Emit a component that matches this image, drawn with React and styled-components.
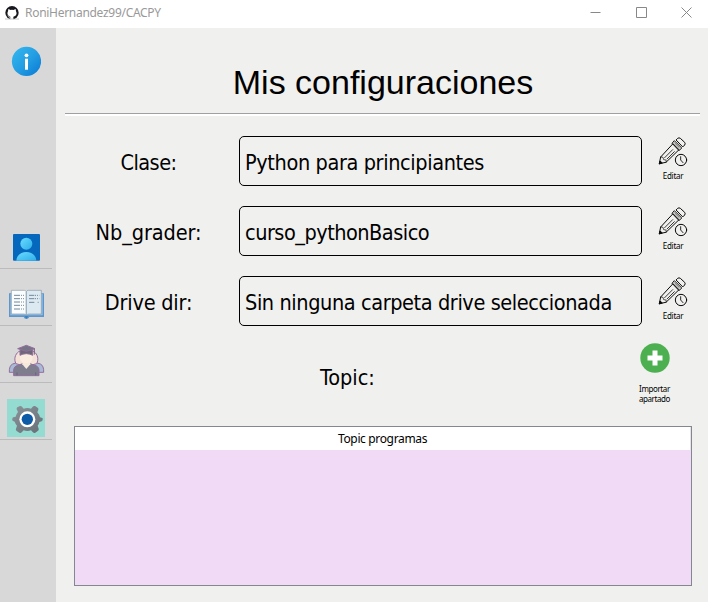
import React from 'react';
import styled, { createGlobalStyle } from 'styled-components';

const Global = createGlobalStyle`
  * { box-sizing: border-box; }
  body { margin: 0; background: #f0f0ee; }
  button { border: 0; padding: 0; background: none; font: inherit; color: inherit; }
`;

const Window = styled.div`
  width: 708px;
  height: 602px;
  display: flex;
  flex-direction: column;
  overflow: hidden;
  background: #f0f0ee;
  color: #000;
  font-family: "DejaVu Sans Condensed", "DejaVu Sans", sans-serif;
`;

const TitleBar = styled.header`
  height: 28px;
  flex: none;
  display: flex;
  align-items: center;
  background: #fff;
  padding: 0 0 3px 5px;
`;

const WindowTitle = styled.span`
  flex: 1;
  margin-left: 6px;
  font: 12px/16px "Noto Sans", sans-serif;
  letter-spacing: -0.29px;
  color: #999;
`;

const WindowButton = styled.button`
  width: 46px;
  height: 25px;
  display: flex;
  align-items: center;
  justify-content: center;

  &:last-child {
    width: 44px;
  }
`;

const Body = styled.div`
  flex: 1;
  display: flex;
  min-height: 0;
`;

const Sidebar = styled.nav`
  width: 56px;
  flex: none;
  background: #d8d8d8;
  display: flex;
  flex-direction: column;
`;

const InfoButton = styled.button`
  width: 30px;
  height: 30px;
  margin: 18px 0 136px 11px;
  display: block;
`;

const NavCell = styled.div`
  width: 52px;
  height: 57px;
  border-bottom: 1px solid #bbb;
  display: flex;
  align-items: flex-end;
  padding: 0 0 2px 7px;
`;

const NavButton = styled.button`
  width: 38px;
  height: 38px;
  background: ${p => (p.$active ? '#94dbd2' : 'transparent')};
`;

const Icon = styled.svg`
  display: block;
  flex: none;
`;

const Main = styled.main`
  flex: 1;
  min-width: 0;
  padding: 0 8px 0 9px;
`;

const Heading = styled.h1`
  margin: 0;
  height: 86px;
  padding: 34px 0 0 1px;
  text-align: center;
  font: 400 34px/40px "Liberation Sans", sans-serif;
  border-bottom: 1px solid #a0a0a0;
`;

const Settings = styled.section`
  border-top: 2px solid #fff;
  padding-top: 20px;
`;

const Row = styled.div`
  display: grid;
  grid-template-columns: 167px 403px 64px;
  column-gap: 7px;
  height: 50px;
  margin-bottom: 20px;
`;

const Label = styled.div`
  font-size: 21.5px;
  line-height: 26px;
  align-self: center;
  text-align: center;
  padding-top: 3px;
  letter-spacing: ${p => p.$tracking || 0}px;
`;

const Field = styled.div`
  border: 1px solid #000;
  border-radius: 5px;
  display: flex;
  align-items: center;
  padding: 2px 0 0 5px;
  font-size: 21.5px;
  white-space: nowrap;
  letter-spacing: ${p => p.$tracking || 0}px;
`;

const EditButton = styled.button`
  width: 30px;
  margin: 1px 0 0 9px;
  display: flex;
  flex-direction: column;
  align-items: center;
`;

const Caption = styled.span`
  margin-top: ${p => p.$gap}px;
  font: 8px/10px "Noto Sans", sans-serif;
  letter-spacing: ${p => p.$tracking}px;
  text-align: center;
`;

const TopicRow = styled.div`
  height: 80px;
  display: grid;
  grid-template-columns: 565px 48px;
  align-items: start;
`;

const TopicLabel = styled(Label)`
  align-self: start;
  padding-top: 19px;
`;

const ImportButton = styled.button`
  width: 49px;
  margin-top: -3px;
  display: flex;
  flex-direction: column;
  align-items: center;
`;

const Table = styled.section`
  margin: 0 8px 0 9px;
  height: 160px;
  border: 1px solid #828790;
  background: #f0daf6;
`;

const TableHead = styled.header`
  height: 23px;
  background: #fff;
  border-right: 1px solid #e5e5e5;
  padding-top: 1px;
  text-align: center;
  font: 12px/22px "Noto Sans", sans-serif;
  letter-spacing: -0.35px;
`;

const Octocat = () => (
  <Icon width="14" height="14" viewBox="0 0 42 42">
    <circle cx="21" cy="20" r="20" fill="#17171d" />
    <path d="M10 9l7 3q4-1 8 0l7-3 1 7c5 10-2 15-8 16v10h-9V32C9 30 5 24 9 16z" fill="#fff" />
    <path d="M0 39h42" stroke="#aaa" strokeWidth="2" />
    <path d="M8 29q4 0 5 5t4 2" fill="none" stroke="#fff" strokeWidth="2" />
  </Icon>
);

const InfoIcon = () => (
  <Icon width="30" height="30" viewBox="0 0 30 30">
    <defs>
      <linearGradient id="info" x1="0" y1="0" x2="1" y2="1">
        <stop stopColor="#35b8ef" /><stop offset=".5" stopColor="#249fe3" /><stop offset="1" stopColor="#0878d4" />
      </linearGradient>
    </defs>
    <circle cx="15.5" cy="15.4" r="14.6" fill="url(#info)" />
    <circle cx="15.5" cy="9.3" r="1.9" fill="#fff" />
    <path d="M14 12.7h3v11h-3z" fill="#fff" />
  </Icon>
);

const UserIcon = () => (
  <Icon width="38" height="38" viewBox="21 9 114 114">
    <defs>
      <linearGradient id="user" x1="0" y1="0" x2="1" y2="1">
        <stop stopColor="#6adcff" /><stop offset="1" stopColor="#2eaee9" />
      </linearGradient>
    </defs>
    <rect x="39" y="27" width="81" height="80" rx="3" fill="#0668bd" />
    <circle cx="79" cy="56" r="18" fill="url(#user)" />
    <path d="M49 107c1-16 14-26 30-26s29 10 30 26z" fill="url(#user)" />
  </Icon>
);

const BookIcon = () => (
  <Icon width="38" height="38" viewBox="21 180 114 114">
    <path d="M27 205h105v71H88q-3 6-9 6t-8-6H27z" fill="#5d95cc" />
    <path d="M31 207h97v64H31z" fill="#94c1e8" />
    <path d="M34 196h39q4 0 6 4v71q-3-4-7-4H34z" fill="#fbfcfd" stroke="#8597a5" strokeWidth="2" />
    <path d="M79 200q2-4 6-4h39v71H87q-5 0-8 4z" fill="#dce9f1" stroke="#8597a5" strokeWidth="2" />
    <path d="M79 200v69" stroke="#9ab1c1" strokeWidth="2" />
    <g stroke="#71889a" strokeWidth="3">
      <path d="M42 211h18M42 221h18M42 231h18M42 241h18M42 252h18M87 211h16M87 221h16M87 232h16" />
      <path d="M63 211h9M63 221h9M63 231h9M63 241h9M63 252h9M105 211h13M105 221h13M113 232h4" strokeDasharray="3 3" />
    </g>
    <path d="M74 274l5 7 6-7" fill="#337ec1" />
  </Icon>
);

const StudentsIcon = () => (
  <Icon width="38" height="38" viewBox="21 21 114 114">
    <g stroke="#926e9d" strokeWidth="3" strokeLinejoin="round">
      <path d="M28 112q-1-20 10-25l15-5h53l15 5q11 5 10 25z" fill="#a8bad5" />
      <path d="M48 86c-7-13-3-28 8-36h46c11 8 15 23 8 36l-11 3H59z" fill="#f4e2d8" />
      <path d="M41 122v-17q1-12 15-15l12-4h22l12 4q14 3 15 15v17z" fill="#7d7d8e" />
      <path d="M68 80l-1 8 12 14 12-14-1-8z" fill="#f5e9dc" stroke="none" />
      <path d="M60 49h38v17q0 18-19 19-19-1-19-19z" fill="#faeddf" stroke="none" />
      <path d="M60 45l19-5 19 5v16q-8-5-19-5t-19 5z" fill="#6c6878" />
      <path d="M53 41l26-10 26 10-26 8z" fill="#777386" />
    </g>
    <path d="M103 42v17" stroke="#77627e" strokeWidth="3" />
    <path d="M51 112v9M107 112v9" stroke="#655a78" strokeWidth="2" />
  </Icon>
);

const GearIcon = () => (
  <Icon width="38" height="38" viewBox="21 192 114 114">
    <defs>
      <linearGradient id="gear" x1="0" y1="0" x2="1" y2="1">
        <stop stopColor="#8c949b" /><stop offset="1" stopColor="#666e76" />
      </linearGradient>
    </defs>
    <path d="M60 213q3-1 6 2l5 6q11-4 22 0l5-6q3-3 7-2l8 5q3 2 2 6l-3 8q6 7 8 15l7 2q2 1 1 5-1 4-3 5l-7 2q-1 6-5 11l3 9q1 4-2 6l-8 6q-4 2-8-2l-5-5q-11 4-22 0l-5 5q-4 4-8 2l-8-5q-4-3-2-7l3-9q-5-6-7-12l-6-3q-2-1-1-6 0-3 3-4l7-2q2-8 7-14l-4-8q-1-4 2-6z" fill="url(#gear)" />
    <circle cx="82" cy="253" r="24" fill="#fff" />
    <circle cx="82" cy="253" r="17" fill="#0d5ba7" />
  </Icon>
);

const PencilIcon = () => (
  <Icon width="30" height="30" viewBox="84 36 90 90" fill="none" stroke="#090909" strokeWidth="3" strokeLinejoin="round" strokeLinecap="round">
    <path d="M88 115l4-19 37-40 18 18-38 37z" />
    <path d="M92 96l7 1 2 7 7 1 1 6" strokeWidth="2" />
    <path d="M104 98l24-24M111 102l22-22" strokeWidth="2.4" />
    <path d="M127 54l6-7 22 22-7 7z" />
    <path d="M134 54l14 14" strokeWidth="2" />
    <path d="M139 44l4-4q4-3 8 0l13 12q3 4 0 8l-5 5z" />
    <path d="M88 116l2-8 6 5z" fill="#090909" />
    <circle cx="153" cy="105" r="17" fill="#f0f0ee" />
    <path d="M152 95v10l7 8" strokeWidth="2.6" />
  </Icon>
);

const PlusIcon = () => (
  <Icon width="30" height="30" viewBox="0 0 30 30">
    <circle cx="15" cy="15" r="14.7" fill="#4caf50" />
    <path d="M12.5 7.5h5v5h5v5h-5v5h-5v-5h-5v-5h5z" fill="#fff" />
  </Icon>
);

const rows = [
  { label: 'Clase:', labelTracking: -0.5, value: 'Python para principiantes', tracking: -0.38 },
  { label: 'Nb_grader:', labelTracking: -0.1, value: 'curso_pythonBasico', tracking: -0.5 },
  { label: 'Drive dir:', labelTracking: -0.2, value: 'Sin ninguna carpeta drive seleccionada', tracking: -0.4 },
];

const nav = [UserIcon, BookIcon, StudentsIcon, GearIcon];

export default function App() {
  return (
    <>
      <Global />
      <Window>
        <TitleBar>
          <Octocat />
          <WindowTitle>RoniHernandez99/CACPY</WindowTitle>
          {['M.5 5.5h10', 'M.5.5h10v10H.5z', 'M.5.5l10 10M10.5.5l-10 10'].map(d => (
            <WindowButton key={d}>
              <Icon width="11" height="11" viewBox="0 0 11 11" fill="none" stroke="#888"><path d={d} /></Icon>
            </WindowButton>
          ))}
        </TitleBar>
        <Body>
          <Sidebar>
            <InfoButton><InfoIcon /></InfoButton>
            {nav.map((NavIcon, i) => (
              <NavCell key={i}><NavButton $active={i === 3}><NavIcon /></NavButton></NavCell>
            ))}
          </Sidebar>
          <Main>
            <Heading>Mis configuraciones</Heading>
            <Settings>
              {rows.map(r => (
                <Row key={r.label}>
                  <Label $tracking={r.labelTracking}>{r.label}</Label>
                  <Field $tracking={r.tracking}>{r.value}</Field>
                  <EditButton>
                    <PencilIcon />
                    <Caption $gap={4} $tracking={-0.3}>Editar</Caption>
                  </EditButton>
                </Row>
              ))}
              <TopicRow>
                <TopicLabel>Topic:</TopicLabel>
                <ImportButton>
                  <PlusIcon />
                  <Caption $gap={11} $tracking={-0.4}>Importar<br />apartado</Caption>
                </ImportButton>
              </TopicRow>
            </Settings>
            <Table><TableHead>Topic programas</TableHead></Table>
          </Main>
        </Body>
      </Window>
    </>
  );
}
